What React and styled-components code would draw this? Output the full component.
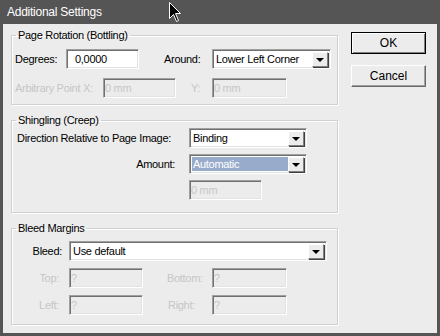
import React from 'react'
import styled, { createGlobalStyle } from 'styled-components';

const Global = createGlobalStyle`
    html, body { margin: 0; padding: 0; background: #555555; }
    body { font-family: "Liberation Sans", Arial, sans-serif; }
`;

const Window = styled.div`
    position: relative;
    width: 440px;
    height: 336px;
    background: #555555;
    padding: 0 3px 3px 3px;
    box-sizing: border-box;
    display: flex;
    flex-direction: column;
`;
const TitleBar = styled.div`
    height: 24px;
    line-height: 25px;
    padding-left: 4px;
    color: #ffffff;
    font-size: 12px;
    letter-spacing: -0.25px;
`;
const Body = styled.div`
    flex: 1;
    background: #ececec;
    display: flex;
    gap: 13px;
    padding: 4px 11px 0 8px;
    font-size: 11px;
    letter-spacing: -0.3px;
    color: #000;
`;
const Groups = styled.div`
    width: 327px;
    display: flex;
    flex-direction: column;
    gap: 8px;
`;
const Group = styled.fieldset`
    margin: 0;
    padding: ${({top}) => top}px 0 ${({bottom}) => bottom}px 0;
    border: 1px solid #d0d0d0;
    box-shadow: inset 1px 1px 0 #ffffff, 1px 1px 0 #ffffff;
    min-width: 0;
    display: flex;
    flex-direction: column;
    gap: ${({gap}) => gap}px;
`;
const Legend = styled.legend`
    margin-left: 4px;
    padding: 0 2px;
    line-height: 14px;
    font-size: 11px;
`;
const Row = styled.div`
    display: flex;
    align-items: center;
    height: 20px;
    padding-left: ${({pad}) => pad || 0}px;
`;
const Label = styled.span`
    flex: none;
    width: ${({w}) => w}px;
    margin-left: ${({ml}) => ml || 0}px;
    padding: 0 ${({pr}) => pr || 0}px 0 ${({pl}) => pl || 0}px;
    box-sizing: border-box;
    text-align: ${({right}) => right ? 'right' : 'left'};
    color: ${({disabled}) => disabled ? '#c6c6c6' : '#000'};
    white-space: nowrap;
`;
const Field = styled.div`
    flex: none;
    width: ${({w}) => w}px;
    height: 20px;
    box-sizing: border-box;
    border: 1px solid;
    border-color: #a0a0a0 #ffffff #ffffff #a0a0a0;
    box-shadow: inset 1px 1px 0 #707070, inset -1px -1px 0 #e3e3e3;
    background: ${({disabled}) => disabled ? '#ececec' : '#ffffff'};
    color: ${({disabled}) => disabled ? '#c6c6c6' : '#000'};
    padding: 0 0 0 ${({disabled}) => disabled ? 1 : 8}px;
    line-height: 18px;
    margin-left: ${({ml}) => ml || 0}px;
`;
const Select = styled.div`
    flex: none;
    width: ${({w}) => w}px;
    height: 20px;
    box-sizing: border-box;
    border: 1px solid;
    border-color: #a0a0a0 #ffffff #ffffff #a0a0a0;
    box-shadow: inset 1px 1px 0 #707070, inset -1px -1px 0 #e3e3e3;
    background: #ffffff;
    display: flex;
    padding: 2px;
    margin-left: ${({ml}) => ml || 0}px;
`;
const SelectText = styled.div`
    flex: 1;
    line-height: 15px;
    padding-left: 1px;
    background: ${({active}) => active ? '#98abca' : 'transparent'};
    color: ${({active}) => active ? '#ffffff' : '#000'};
    white-space: nowrap;
    overflow: hidden;
`;
const Arrow = styled.div`
    flex: none;
    width: 16px;
    height: 15px;
    box-sizing: border-box;
    background: #ececec;
    border: 1px solid;
    border-color: #ffffff #808080 #808080 #ffffff;
    box-shadow: 1px 1px 0 #404040;
    display: flex;
    align-items: center;
    justify-content: center;
    &::after {
        content: '';
        border-left: 4px solid transparent;
        border-right: 4px solid transparent;
        border-top: 4px solid #000;
    }
`;
const Buttons = styled.div`
    display: flex;
    flex-direction: column;
    gap: 11px;
    margin-top: 4px;
`;
const Button = styled.div`
    width: 75px;
    height: 22px;
    box-sizing: border-box;
    background: #ececec;
    border: 1px solid;
    border-color: ${({primary}) => primary ? '#000' : '#ffffff #696969 #696969 #ffffff'};
    box-shadow: ${({primary}) => primary
        ? 'inset 1px 1px 0 #ffffff, inset -1px -1px 0 #808080'
        : 'inset -1px -1px 0 #a0a0a0'};
    display: flex;
    align-items: center;
    justify-content: center;
    font-size: 12px;
    letter-spacing: 0;
`;
const Cursor = styled.svg`
    position: absolute;
    left: 169px;
    top: 2px;
`;

const Combo = ({w, ml, active, children}) => (
    <Select w={w} ml={ml}>
        <SelectText active={active}>{children}</SelectText>
        <Arrow/>
    </Select>
);

const App = () => {
  return (
    <Window>
      <Global/>
      <TitleBar>Additional Settings</TitleBar>
      <Body>
        <Groups>
          <Group top={7} bottom={6} gap={9}>
            <Legend>Page Rotation (Bottling)</Legend>
            <Row pad={3}>
              <Label w={51}>Degrees:</Label>
              <Field w={73}>0,0000</Field>
              <Label w={48} ml={25}>Around:</Label>
              <Combo w={119}>Lower Left Corner</Combo>
            </Row>
            <Row pad={3}>
              <Label w={88} disabled>Arbitrary Point X:</Label>
              <Field w={73} disabled>0 mm</Field>
              <Label w={36} pl={15} disabled>Y:</Label>
              <Field w={75} disabled>0 mm</Field>
            </Row>
          </Group>
          <Group top={1} bottom={12} gap={6}>
            <Legend>Shingling (Creep)</Legend>
            <Row pad={5}>
              <Label w={172}>Direction Relative to Page Image:</Label>
              <Combo w={118}>Binding</Combo>
            </Row>
            <Row pad={5}>
              <Label w={172} right pr={14}>Amount:</Label>
              <Combo w={118} active>Automatic</Combo>
            </Row>
            <Row pad={5}>
              <Field w={73} ml={172} disabled>0 mm</Field>
            </Row>
          </Group>
          <Group top={6} bottom={9} gap={7}>
            <Legend>Bleed Margins</Legend>
            <Row>
              <Label w={57} right pr={7}>Bleed:</Label>
              <Combo w={258}>Use default</Combo>
            </Row>
            <Row>
              <Label w={57} right pr={10} disabled>Top:</Label>
              <Field w={74} disabled>?</Field>
              <Label w={69} pl={24} disabled>Bottom:</Label>
              <Field w={75} disabled>?</Field>
            </Row>
            <Row>
              <Label w={57} right pr={10} disabled>Left:</Label>
              <Field w={74} disabled>?</Field>
              <Label w={69} pl={25} disabled>Right:</Label>
              <Field w={75} disabled>?</Field>
            </Row>
          </Group>
        </Groups>
        <Buttons>
          <Button primary>OK</Button>
          <Button>Cancel</Button>
        </Buttons>
      </Body>
      <Cursor width="13" height="21" viewBox="0 0 13 21">
        <path d="M0.5 0.5 L0.5 16.5 L4.5 12.5 L7.5 19.5 L9.5 18.5 L6.5 11.5 L11.5 11.5 Z" fill="#000" stroke="#fff" strokeWidth="1"/>
      </Cursor>
    </Window>
  )
}

export default App
